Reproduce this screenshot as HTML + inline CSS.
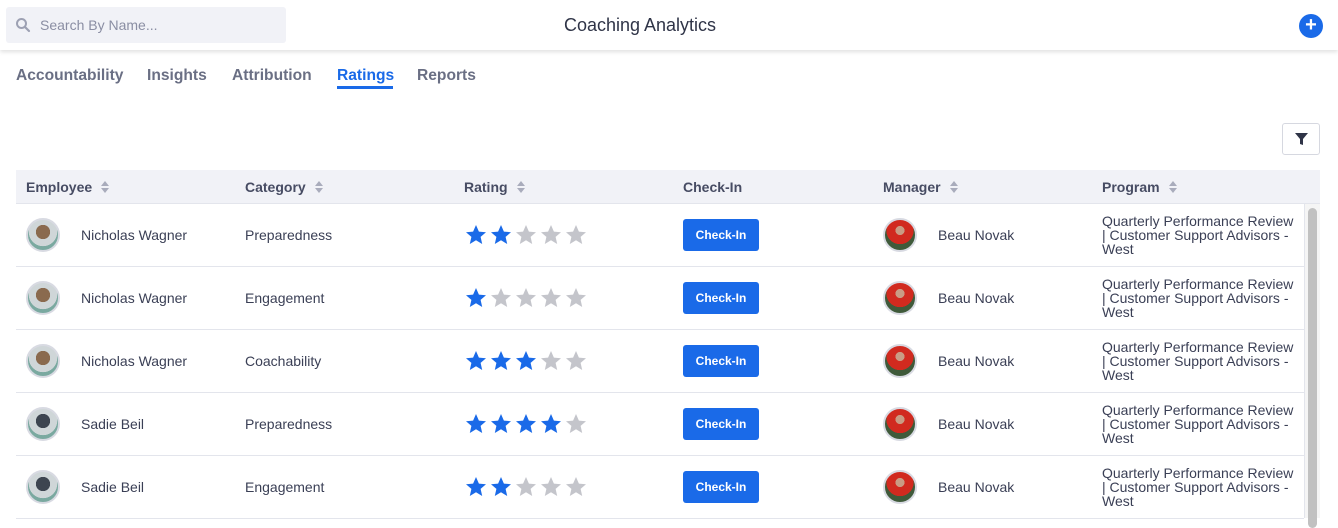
<!DOCTYPE html>
<html><head><meta charset="utf-8"><style>
*{box-sizing:border-box;margin:0;padding:0}
body{width:1338px;height:518px;overflow:hidden;background:#fff;font-family:"Liberation Sans",sans-serif;color:#3a3f55;position:relative}
.top{position:absolute;left:0;top:0;width:1338px;height:50px;background:#fff;box-shadow:0 2px 4px rgba(0,0,0,.12)}
.search{position:absolute;left:6px;top:7px;width:280px;height:36px;background:#f1f2f7;border-radius:3px;font-size:14px;color:#8a8ea3;line-height:36px;padding-left:34px}
.title{position:absolute;left:0;width:1280px;text-align:center;top:15px;font-size:18px;color:#2f3447}
.plus{position:absolute;left:1299px;top:14px;width:24px;height:24px;border-radius:50%;background:#1a6ae8;color:#fff;text-align:center;line-height:23px;font-size:20px;font-weight:bold}
.tab{position:absolute;top:67px;font-size:15.6px;font-weight:bold;color:#6a6f84}
.filter{position:absolute;left:1282px;top:123px;width:38px;height:32px;border:1px solid #d6d8e0;border-radius:3px}
.thead{position:absolute;left:16px;top:170px;width:1304px;height:34px;background:#f1f2f7;border-bottom:1px solid #e3e5ec}
.th{position:absolute;top:9px;font-size:14px;font-weight:bold;color:#474c63}
.sort{display:inline-block;margin-left:9px;vertical-align:-1px}
.row{position:absolute;left:16px;width:1288px;height:63px;border-bottom:1px solid #e3e5ec}
.cell{position:absolute;font-size:14px;color:#3a3f55}
.av{position:absolute;width:34px;height:34px;border-radius:50%;border:2px solid #d8dae2;top:14px}
.btn{position:absolute;left:667px;top:15px;width:76px;height:32px;background:#1a6ae8;border-radius:3px;color:#fff;font-size:12px;font-weight:bold;text-align:center;line-height:32px}
.prog{position:absolute;left:1086px;top:10px;font-size:14px;line-height:14px;color:#3a3f55;width:195px}
.stars{position:absolute;left:450px;top:21px}
.scroll{position:absolute;left:1304px;top:204px;width:16px;height:314px;background:#f5f5f5;border-left:1px solid #e3e5ec}
.thumb{position:absolute;left:3px;top:4px;width:9px;height:320px;background:#c1c1c1;border-radius:5px}
</style></head><body>
<div class="top">
 <div class="search">Search By Name...</div>
 <svg style="position:absolute;left:15px;top:17px" width="16" height="16" viewBox="0 0 16 16"><circle cx="6.5" cy="6.5" r="4.5" fill="none" stroke="#9da1b3" stroke-width="2"/><path d="M10 10l4 4" stroke="#9da1b3" stroke-width="2.2" stroke-linecap="round"/></svg>
 <div class="title">Coaching Analytics</div>
 <div class="plus">+</div>
</div>
<div class="tab" style="left:16px">Accountability</div>
<div class="tab" style="left:147px">Insights</div>
<div class="tab" style="left:232px">Attribution</div>
<div class="tab" style="left:337px;color:#1a6ae8">Ratings</div>
<div style="position:absolute;left:337px;top:86px;width:56px;height:3px;background:#1a6ae8"></div>
<div class="tab" style="left:417px">Reports</div>
<div class="filter"><svg style="position:absolute;left:12px;top:9px" width="13" height="13" viewBox="0 0 13 13"><path d="M0 0h13L8 6v6L5 11V6z" fill="#2f3447"/></svg></div>
<div class="thead">
 <div class="th" style="left:10px">Employee<svg class="sort" width="8" height="12"><path d="M4 0L8 5H0zM4 12L0 7h8z" fill="#a9acbc"/></svg></div>
 <div class="th" style="left:229px">Category<svg class="sort" width="8" height="12"><path d="M4 0L8 5H0zM4 12L0 7h8z" fill="#a9acbc"/></svg></div>
 <div class="th" style="left:448px">Rating<svg class="sort" width="8" height="12"><path d="M4 0L8 5H0zM4 12L0 7h8z" fill="#a9acbc"/></svg></div>
 <div class="th" style="left:667px">Check-In</div>
 <div class="th" style="left:867px">Manager<svg class="sort" width="8" height="12"><path d="M4 0L8 5H0zM4 12L0 7h8z" fill="#a9acbc"/></svg></div>
 <div class="th" style="left:1086px">Program<svg class="sort" width="8" height="12"><path d="M4 0L8 5H0zM4 12L0 7h8z" fill="#a9acbc"/></svg></div>
</div>
<svg width="0" height="0" style="position:absolute"><defs><path id="st" d="M10 0l2.9 6.6 7.1.6-5.4 4.7 1.6 7.1L10 15.3 3.8 19l1.6-7.1L0 7.2l7.1-.6z"/></defs></svg>
<div id="rows"></div>
<div class="scroll"><div class="thumb"></div></div>
<script>
var d=[["Nicholas Wagner","Preparedness",2,"#8a6a4e"],["Nicholas Wagner","Engagement",1,"#8a6a4e"],["Nicholas Wagner","Coachability",3,"#8a6a4e"],["Sadie Beil","Preparedness",4,"#3d4550"],["Sadie Beil","Engagement",2,"#3d4550"]];
var h="";
d.forEach(function(r,i){
 var s="";for(var k=0;k<5;k++)s+='<svg style="position:absolute;left:'+(k*25)+'px" width="20" height="20"><use href="#st" fill="'+(k<r[2]?'#1a6ae8':'#c4c5cb')+'"/></svg>';
 h+='<div class="row" style="top:'+(204+i*63)+'px">'+
 '<div class="av" style="left:10px;background:radial-gradient(circle at 50% 40%,'+r[3]+' 0 30%,#cfd6d8 31% 60%,#7aa9a0 61%)"></div>'+
 '<div class="cell" style="left:65px;top:23px">'+r[0]+'</div>'+
 '<div class="cell" style="left:229px;top:23px">'+r[1]+'</div>'+
 '<div class="stars">'+s+'</div>'+
 '<div class="btn">Check-In</div>'+
 '<div class="av" style="left:867px;background:radial-gradient(circle at 50% 35%,#c99c84 0 18%,#d12a1f 19% 55%,#3f5a3a 56%)"></div>'+
 '<div class="cell" style="left:922px;top:23px">Beau Novak</div>'+
 '<div class="prog">Quarterly Performance Review | Customer Support Advisors - West</div></div>';
});
document.getElementById("rows").innerHTML=h;
</script>
</body></html>
